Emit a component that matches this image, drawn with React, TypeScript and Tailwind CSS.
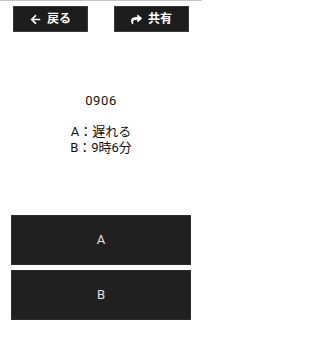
import { FaArrowLeft, FaShare } from 'react-icons/fa';

const font = { fontFamily: 'Roboto, "Noto Sans CJK JP", sans-serif' };

export default function App() {
  return (
    <div
      className="w-[202px] h-[359px] bg-white border-t border-[#c4c4c4] flex flex-col"
      style={font}
    >
      {/* Header actions */}
      <div className="flex justify-between px-[13px] mt-[5px]">
        <button className="w-[75px] h-[26px] bg-[#1c1c1c] border border-[#3a3a3a] flex items-center justify-center gap-[6px] text-white text-[12px] font-bold leading-none">
          <FaArrowLeft className="w-[11px] h-[11px]" />
          <span>戻る</span>
        </button>
        <button className="w-[75px] h-[26px] bg-[#1c1c1c] border border-[#3a3a3a] flex items-center justify-center gap-[6px] text-white text-[12px] font-bold leading-none">
          <FaShare className="w-[11px] h-[11px]" />
          <span>共有</span>
        </button>
      </div>

      {/* Question */}
      <div className="mt-[61px] text-center text-[13px] leading-[15.5px] text-[#111]">
        <div className="tracking-[0.6px]">0906</div>
        <div>&nbsp;</div>
        <div>A：遅れる</div>
        <div>B：9時6分</div>
      </div>

      {/* Answers */}
      <div className="mt-[60px] px-[11px] flex flex-col gap-[5px]">
        <button className="h-[50px] bg-[#202020] border border-[#2c2c2c] text-[#e2e2e2] text-[13px]">
          A
        </button>
        <button className="h-[50px] bg-[#202020] border border-[#2c2c2c] text-[#e2e2e2] text-[13px]">
          B
        </button>
      </div>
    </div>
  );
}
